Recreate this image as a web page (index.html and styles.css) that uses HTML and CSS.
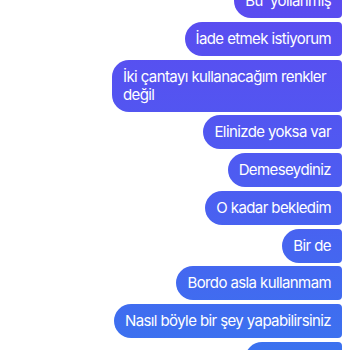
FILE: index.html
```html
<!DOCTYPE html>
<html lang="tr">
<head>
<meta charset="utf-8">
<link rel="stylesheet" href="styles.css">
</head>
<body>
<div class="thread">
  <div class="bubble">Bu  yollanmış</div>
  <div class="bubble">İade etmek istiyorum</div>
  <div class="bubble">İki çantayı kullanacağım renkler değil</div>
  <div class="bubble">Elinizde yoksa var</div>
  <div class="bubble">Demeseydiniz</div>
  <div class="bubble">O kadar bekledim</div>
  <div class="bubble">Bir de</div>
  <div class="bubble">Bordo asla kullanmam</div>
  <div class="bubble">Nasıl böyle bir şey yapabilirsiniz</div>
  <div class="bubble">Ama neden</div>
</div>
</body>
</html>
```
FILE: styles.css
```css
html, body {
  margin: 0;
  padding: 0;
  background: #ffffff;
  overflow: hidden;
  height: 350px;
}
.thread {
  display: flex;
  flex-direction: column;
  align-items: flex-end;
  gap: 3.75px;
  margin-top: -16px;
  padding-right: 8px;
}
.bubble {
  box-sizing: border-box;
  max-width: 230px;
  padding: 8px 11px;
  font-family: "Inter", "Liberation Sans", sans-serif;
  font-size: 15px;
  letter-spacing: -0.6px;
  line-height: 18px;
  color: #ffffff;
  white-space: pre-wrap;
  border-radius: 17px 4px 4px 17px;
  background: linear-gradient(180deg, #5b4bf0 0px, #4e5bf1 170px, #3b72ef 350px);
  background-attachment: fixed;
}
```
